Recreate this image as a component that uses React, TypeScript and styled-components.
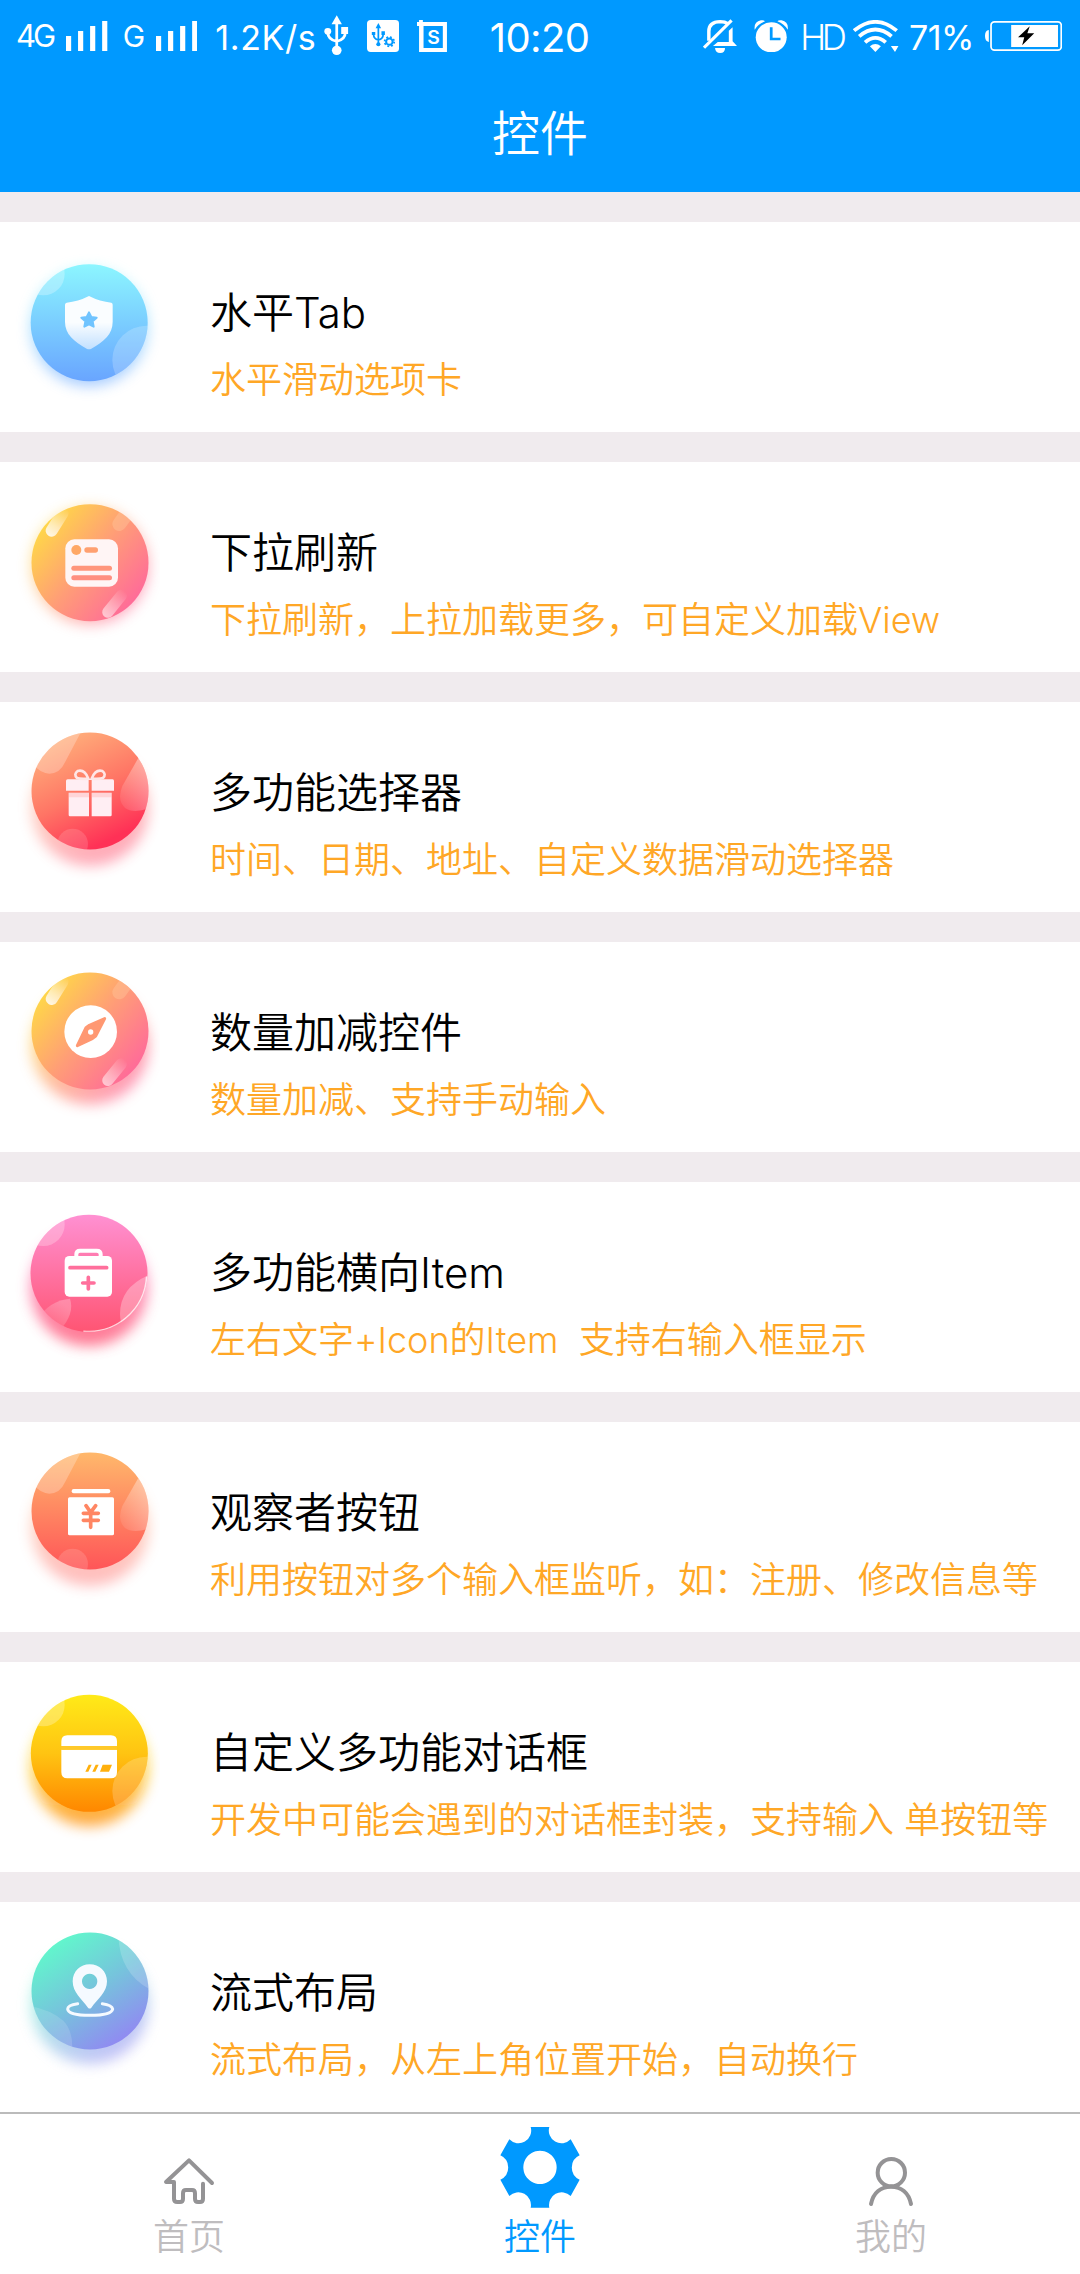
import React from "react";
import styled, { createGlobalStyle } from "styled-components";

const GlobalStyle = createGlobalStyle`
  * { box-sizing: border-box; }
  body {
    margin: 0;
    background: #fff;
    font-family: Inter, "Noto Sans CJK SC", sans-serif;
    font-weight: 350;
  }
  svg { display: block; flex: none; }
`;

const Screen = styled.div`
  display: flex;
  flex-direction: column;
  width: 1080px;
  height: 2274px;
  overflow: hidden;
  background: #f0ebee;
`;

const Header = styled.header`
  height: 192px;
  background: #0099ff;
  color: #fff;
`;

const StatusBar = styled.div`
  display: flex;
  align-items: flex-start;
  height: 72px;
`;

const Slot = styled.div<{ $gap: number; $top: number }>`
  flex: none;
  margin-left: ${(p) => p.$gap}px;
  padding-top: ${(p) => p.$top}px;
`;

const StatusText = styled.span<{
  $gap: number;
  $top: number;
  $width: number;
  $size: number;
  $spacing?: number;
  $weight?: number;
}>`
  flex: none;
  width: ${(p) => p.$width}px;
  margin-left: ${(p) => p.$gap}px;
  padding-top: ${(p) => p.$top}px;
  font-family: Inter, sans-serif;
  font-size: ${(p) => p.$size}px;
  line-height: 40px;
  font-weight: ${(p) => p.$weight ?? 400};
  letter-spacing: ${(p) => p.$spacing ?? 0}px;
  white-space: nowrap;
`;

const PageTitle = styled.h1`
  margin: 0;
  height: 120px;
  line-height: 123px;
  text-align: center;
  font-size: 48px;
  font-weight: 350;
`;

const List = styled.main`
  display: flex;
  flex-direction: column;
  gap: 30px;
  padding-top: 30px;
`;

const Row = styled.section`
  display: flex;
  height: 210px;
  background: #fff;
`;

const RowText = styled.div`
  display: flex;
  flex-direction: column;
  margin-left: 50px;
  padding-top: 59px;
`;

const RowTitle = styled.h2`
  margin: 0;
  height: 64px;
  line-height: 64px;
  font-size: 42px;
  font-weight: 350;
  color: #000;
  white-space: pre;
`;

const RowNote = styled.p`
  margin: 8px 0 0;
  height: 54px;
  line-height: 54px;
  font-size: 36px;
  color: #ffa726;
  white-space: pre;
`;

const TabBar = styled.nav`
  display: grid;
  grid-template-columns: repeat(3, 351px);
  justify-content: center;
  height: 162px;
  border-top: 2px solid #bbb;
  background: #fff;
`;

const Tab = styled.div<{ $active?: boolean }>`
  display: flex;
  flex-direction: column;
  align-items: center;
  padding-top: 12px;
  font-size: 36px;
  line-height: 54px;
  color: ${(p) => (p.$active ? "#0099ff" : "#bfbdbf")};
`;

/* ---------- status bar icons ---------- */

const Glyph = ({ box, children }: { box: [number, number, number, number]; children: React.ReactNode }) => (
  <svg
    width={box[2] / 2.904}
    height={box[3] / 3}
    viewBox={box.join(" ")}
    preserveAspectRatio="none"
    fill="#fff"
  >
    {children}
  </svg>
);

const Signal = () => (
  <Glyph box={[191, 63, 121, 90]}>
    <path d="M191 108h15v45h-15zM226 93h15v60h-15zM261 78h15v75h-15zM296 63h15v90h-15z" />
  </Glyph>
);

const Usb = () => (
  <Glyph box={[943, 45, 71, 121]}>
    <path d="M980 46l15 27h-30z" />
    <circle cx="980" cy="151" r="14" />
    <circle cx="954" cy="94" r="10" />
    <path d="M993 81h20v21h-20z" />
    <path d="M980 70v75M954 96q0 23 26 28M1005 96q0 23-25 28" fill="none" stroke="#fff" strokeWidth="8" />
  </Glyph>
);

const UsbSettings = () => (
  <Glyph box={[1066, 60, 93, 96]}>
    <rect x="1066" y="60" width="93" height="96" rx="11" />
    <g fill="#0099ff" stroke="#0099ff">
      <path d="M1099 69l8 16h-16z" stroke="none" />
      <circle cx="1099" cy="133" r="6" stroke="none" />
      <path d="M1080 96h10v9h-10zM1108 94h10v11h-10z" stroke="none" />
      <path d="M1099 82v48M1085 103q0 14 14 17M1113 103q0 14-14 17" fill="none" strokeWidth="5" />
      <circle cx="1131" cy="125" r="9.5" fill="none" strokeWidth="6" />
      <circle cx="1131" cy="125" r="14" fill="none" strokeWidth="5" strokeDasharray="5.5 5.5" />
    </g>
  </Glyph>
);

const Shot = () => (
  <Glyph box={[1211, 60, 87, 96]}>
    <path d="M1217 60h11v6h70v90h-81v-78h-6v-12h6zM1230 78v66h56v-66z" fillRule="evenodd" />
    <text x="1259" y="132" textAnchor="middle" fontFamily="Inter" fontSize="56" fontWeight="600">
      S
    </text>
  </Glyph>
);

const Muted = () => (
  <Glyph box={[473, 57, 99, 102]}>
    <path
      d="M490 122V94q0-28 33-29q14 0 22 6"
      fill="none"
      stroke="#fff"
      strokeWidth="10"
    />
    <path d="M548 92l11-10v42l13 14h-70l14-12h32z" />
    <path d="M476 143L556 61" stroke="#fff" strokeWidth="9" />
    <path d="M508 144h29q0 15-14 15t-15-15z" />
  </Glyph>
);

const Alarm = () => (
  <Glyph box={[620, 59, 100, 97]}>
    <circle cx="670" cy="111" r="45" />
    <path d="M622 88q-3-24 18-28q8-2 12 3q-20 8-30 25zM718 88q3-24-18-28q-8-2-12 3q20 8 30 25z" />
    <path d="M670 81v35h27" fill="none" stroke="#0099ff" strokeWidth="8" />
  </Glyph>
);

const Wifi = () => (
  <Glyph box={[908, 60, 133, 97]}>
    <g fill="none" stroke="#fff" strokeWidth="11">
      <path d="M911 92q62-53 124 0" />
      <path d="M926 109q47-41 94 0" />
      <path d="M943 127q30-27 60 0" />
    </g>
    <path d="M957 139q16-14 32 0l-16 17zM1018 138h22l-10 18z" />
  </Glyph>
);

const Battery = () => (
  <Glyph box={[1292, 63, 224, 90]}>
    <path d="M1303 90v36q-11-2-11-18t11-18z" />
    <rect x="1309.5" y="65.5" width="204" height="85" rx="10" fill="none" stroke="#fff" strokeWidth="5" />
    <path d="M1368 75h136v66h-136z" />
    <path d="M1422 79l-34 33h18l-6 24l35-36h-20z" fill="#000" />
  </Glyph>
);

/* ---------- list badges ---------- */

type Stops = [string, string][];

interface BadgeProps {
  id: string;
  cx: number;
  cy: number;
  dir: [number, number, number, number];
  stops: Stops;
  shadowY: number;
  shadowOpacity: number;
  decor: React.ReactNode;
  children: React.ReactNode;
}

const Badge = ({ id, cx, cy, dir, stops, shadowY, shadowOpacity, decor, children }: BadgeProps) => (
  <svg width="160" height="210" viewBox="0 6 480 630">
    <defs>
      <linearGradient id={`${id}-fill`} x1={dir[0]} y1={dir[1]} x2={dir[2]} y2={dir[3]}>
        {stops.map(([offset, color]) => (
          <stop key={offset} offset={offset} stopColor={color} />
        ))}
      </linearGradient>
      <clipPath id={`${id}-clip`}>
        <circle cx={cx} cy={cy} r="175.5" />
      </clipPath>
      <filter id={`${id}-blur`} x="-30%" y="-30%" width="160%" height="160%">
        <feGaussianBlur stdDeviation="20" />
      </filter>
      <linearGradient id={`${id}-shine`} x1="0" y1="1" x2="0" y2="0">
        <stop offset="0" stopColor="#fff" stopOpacity="0.85" />
        <stop offset="0.35" stopColor="#fff" stopOpacity="0.6" />
        <stop offset="1" stopColor="#fff" stopOpacity="0" />
      </linearGradient>
      <linearGradient id={`${id}-glow`} x1="1" y1="0" x2="0" y2="1">
        <stop offset="0.2" stopColor="#fff" stopOpacity="0.42" />
        <stop offset="1" stopColor="#fff" stopOpacity="0.05" />
      </linearGradient>
    </defs>
    <circle
      cx={cx}
      cy={cy + shadowY}
      r="176"
      fill={`url(#${id}-fill)`}
      opacity={shadowOpacity}
      filter={`url(#${id}-blur)`}
    />
    <circle cx={cx} cy={cy} r="175.5" fill={`url(#${id}-fill)`} />
    <g clipPath={`url(#${id}-clip)`}>{decor}</g>
    {children}
  </svg>
);

const VERTICAL: [number, number, number, number] = [0, 0, 0, 1];
const DIAGONAL: [number, number, number, number] = [0.12, 0.18, 0.88, 0.82];
const SUNSET: Stops = [
  ["0", "#ffd54a"],
  ["0.5", "#ff9d77"],
  ["1", "#ff6c98"],
];

const Bubbles = () => (
  <g fill="#fff">
    <circle cx="130" cy="135" r="64" opacity="0.27" />
    <circle cx="440" cy="393" r="103" opacity="0.2" />
  </g>
);

const Streaks = ({ id }: { id: string }) => (
  <g>
    <rect x="-18" y="-80" width="36" height="98" rx="18" transform="translate(155 177) rotate(32)" fill={`url(#${id}-shine)`} />
    <rect x="-17" y="-82" width="34" height="98" rx="17" transform="translate(323 422) rotate(39)" fill={`url(#${id}-shine)`} opacity="0.7" />
    <rect x="-21" y="-60" width="42" height="81" rx="21" transform="translate(358 157) rotate(36)" fill="#ffc49a" opacity="0.45" />
  </g>
);

const Petals = ({ id }: { id: string }) => (
  <g fill="#fff">
    <path d="M90 60H262L195 187Q180 221 148 221Q118 219 98 190Z" opacity="0.25" />
    <path d="M440 130L367 258Q350 300 375 324Q400 342 450 324Z" fill={`url(#${id}-glow)`} />
    <circle cx="218" cy="432" r="46" opacity="0.14" />
  </g>
);

const ShieldBadge = () => (
  <Badge id="shield" cx={267.5} cy={308} dir={VERTICAL} stops={[["0", "#8cf6ff"], ["1", "#69a5ff"]]} shadowY={14} shadowOpacity={0.6}
    decor={<g transform="translate(0 27)"><Bubbles /></g>}
  >
    <linearGradient id="shield-face" x1="0" y1="0" x2="0" y2="1">
      <stop offset="0.5" stopColor="#fafdff" />
      <stop offset="1" stopColor="#c2e0ff" />
    </linearGradient>
    <path d="M267 228Q300 245 334 248Q338 249 338 254V305C338 343 312 364 274 386Q267 390 260 386C222 364 195 343 195 305V254Q195 249 200 248Q234 245 267 228Z" fill="url(#shield-face)" />
    <path d="M267 277L274 291L290 293L278 304L281 320L267 313L253 320L256 304L244 293L260 291Z" fill="#70c4ff" stroke="#70c4ff" strokeWidth="6" strokeLinejoin="round" />
  </Badge>
);

const CardListBadge = () => (
  <Badge id="list" cx={270} cy={308} dir={DIAGONAL} stops={SUNSET} shadowY={10} shadowOpacity={0.6}
    decor={<g transform="translate(0 35)"><Streaks id="list" /></g>}
  >
    <rect x="196" y="238" width="158" height="142" rx="27" fill="#fff5f5" />
    <circle cx="229" cy="270" r="15" fill="#ffa866" />
    <rect x="253" y="262" width="41" height="16" rx="8" fill="#ffa070" />
    <rect x="214" y="317" width="122" height="15" rx="7.5" fill="#ff957b" />
    <rect x="214" y="346" width="122" height="15" rx="7.5" fill="#ff8f80" />
  </Badge>
);

const GiftBadge = () => (
  <Badge id="gift" cx={270} cy={273} dir={[0.25, 0, 0.75, 1]} stops={[["0", "#ffb37c"], ["0.5", "#ff7565"], ["0.9", "#ff3156"]]} shadowY={48} shadowOpacity={0.42}
    decor={<Petals id="gift" />}
  >
    <path d="M198 243q0-5 5-5h63v34h-68zM275 238h63q4 0 4 5v29h-67zM206 278h61v71h-57q-4 0-4-4zM275 278h60v67q0 4-4 4h-56z" fill="#ffeef3" />
    <path d="M206 278h61v14h-61zM275 278h60v14h-60z" fill="#ff9b9b" opacity="0.3" />
    <path d="M265 236Q254 207 233 213Q220 223 231 234Q240 238 265 236ZM275 236Q286 207 307 213Q320 223 309 234Q300 238 275 236Z" fill="none" stroke="#ffe6e6" strokeWidth="8" />
  </Badge>
);

const CompassBadge = () => (
  <Badge id="compass" cx={270} cy={273} dir={DIAGONAL} stops={SUNSET} shadowY={44} shadowOpacity={0.7} decor={<Streaks id="compass" />}>
    <circle cx="272" cy="275" r="79" fill="#fff" />
    <path d="M314 236L287 288L277 296L232 317L258 263L268 256Z" fill="#ff9872" stroke="#ff9872" strokeWidth="9" strokeLinejoin="round" />
    <circle cx="272" cy="276" r="8" fill="#fff" />
  </Badge>
);

const MedicalBadge = () => (
  <Badge id="medical" cx={267} cy={280} dir={VERTICAL} stops={[["0", "#ff90d2"], ["1", "#ff5573"]]} shadowY={42} shadowOpacity={0.8}
    decor={
      <g fill="#fff">
        <circle cx="130" cy="134" r="64" opacity="0.25" />
        <path d="M460 280Q360 315 360 402Q360 435 380 470H460Z" opacity="0.3" />
        <path d="M110 420Q150 360 210 356Q225 400 180 450Z" fill="url(#medical-glow)" opacity="0.6" />
        <path d="M441 290A175 175 0 0 1 250 455" fill="none" stroke="#fff" strokeWidth="7" opacity="0.75" />
      </g>
    }
  >
    <path d="M229 234V223Q229 212 240 212H290Q302 212 302 223V234" fill="none" stroke="#fff" strokeWidth="12" />
    <rect x="194" y="228" width="142" height="122" rx="14" fill="#fff" />
    <path d="M210 263H320M248 309H282M265 292V327" stroke="#ff6f9c" strokeWidth="11" strokeLinecap="round" />
  </Badge>
);

const MoneyBadge = () => (
  <Badge id="money" cx={270} cy={273} dir={VERTICAL} stops={[["0", "#ffb86b"], ["1", "#ff5558"]]} shadowY={48} shadowOpacity={0.4} decor={<Petals id="money" />}>
    <rect x="215" y="207" width="116" height="13" rx="6" fill="#fff" />
    <rect x="204" y="232" width="138" height="114" rx="5" fill="#fff" />
    <path d="M258 257L272 277L287 257M250 280H295M250 301H295M272 277V322" fill="none" stroke="#ff8663" strokeWidth="11" strokeLinecap="round" strokeLinejoin="round" />
  </Badge>
);

const CreditBadge = () => (
  <Badge id="credit" cx={268} cy={280} dir={VERTICAL} stops={[["0", "#ffea18"], ["0.5", "#ffc412"], ["1", "#ff8700"]]} shadowY={42} shadowOpacity={0.75} decor={<Bubbles />}>
    <path d="M184 258V244Q184 226 202 226H333Q351 226 351 244V258ZM184 269H351V337Q351 355 333 355H202Q184 355 184 337Z" fill="#fff" />
    <path d="M184 258H351V269H184Z" fill="#ffc92a" />
    <path d="M266 314h9l-10 21h-9zM287 314h9l-10 21h-9zM308 314h28l-9 21h-27z" fill="#ffb00d" />
  </Badge>
);

const PlaceBadge = () => (
  <Badge id="place" cx={270} cy={273} dir={[0.2, 0.05, 0.8, 0.95]} stops={[["0", "#60facb"], ["0.5", "#76c4dc"], ["1", "#9286f3"]]} shadowY={42} shadowOpacity={0.55}
    decor={
      <g fill="#fff">
        <path d="M355 110Q360 220 450 268V110Z" opacity="0.18" />
        <path d="M90 318Q150 328 190 362Q222 395 216 460H90Z" opacity="0.14" />
      </g>
    }
  >
    <path d="M269 193C241 193 218 214 218 244C218 278 246 297 264 323Q269 328 274 323C292 297 321 278 321 244C321 214 298 193 269 193ZM269 221A23 23 0 1 1 268.9 221Z" fill="#f5faff" fillRule="evenodd" />
    <path d="M233 311Q203 315 203 327Q205 346 270 346Q335 346 338 327Q336 315 307 311" fill="none" stroke="#f5faff" strokeWidth="9" strokeLinecap="round" />
  </Badge>
);

const items: { icon: React.ComponentType; title: string; note: string }[] = [
  { icon: ShieldBadge, title: "水平Tab", note: "水平滑动选项卡" },
  { icon: CardListBadge, title: "下拉刷新", note: "下拉刷新，上拉加载更多，可自定义加载View" },
  { icon: GiftBadge, title: "多功能选择器", note: "时间、日期、地址、自定义数据滑动选择器" },
  { icon: CompassBadge, title: "数量加减控件", note: "数量加减、支持手动输入" },
  { icon: MedicalBadge, title: "多功能横向Item", note: "左右文字+Icon的Item  支持右输入框显示" },
  { icon: MoneyBadge, title: "观察者按钮", note: "利用按钮对多个输入框监听，如：注册、修改信息等" },
  { icon: CreditBadge, title: "自定义多功能对话框", note: "开发中可能会遇到的对话框封装，支持输入 单按钮等" },
  { icon: PlaceBadge, title: "流式布局", note: "流式布局，从左上角位置开始，自动换行" },
];

export default function App() {
  return (
    <>
      <GlobalStyle />
      <Screen>
        <Header>
          <StatusBar>
            <StatusText $gap={16} $top={16} $width={50} $size={31} $spacing={-3}>4G</StatusText>
            <Slot $gap={0} $top={21}><Signal /></Slot>
            <StatusText $gap={15} $top={16} $width={33} $size={30} $spacing={-2}>G</StatusText>
            <Slot $gap={0} $top={21}><Signal /></Slot>
            <StatusText $gap={18} $top={18} $width={109} $size={34} $spacing={0.6}>1.2K/s</StatusText>
            <Slot $gap={0} $top={15}><Usb /></Slot>
            <Slot $gap={18} $top={20}><UsbSettings /></Slot>
            <Slot $gap={18} $top={20}><Shot /></Slot>
            <StatusText $gap={43} $top={18} $width={213} $size={40} $spacing={-0.6}>10:20</StatusText>
            <Slot $gap={0} $top={19}><Muted /></Slot>
            <Slot $gap={17} $top={20}><Alarm /></Slot>
            <StatusText $gap={12} $top={17} $width={53} $size={35} $spacing={-4.5} $weight={300}>HD</StatusText>
            <Slot $gap={0} $top={20}><Wifi /></Slot>
            <StatusText $gap={10} $top={18} $width={76} $size={34} $spacing={-0.6}>71%</StatusText>
            <Slot $gap={0} $top={21}><Battery /></Slot>
          </StatusBar>
          <PageTitle>控件</PageTitle>
        </Header>
        <List>
          {items.map(({ icon: Icon, title, note }) => (
            <Row key={title}>
              <Icon />
              <RowText>
                <RowTitle>{title}</RowTitle>
                <RowNote>{note}</RowNote>
              </RowText>
            </Row>
          ))}
        </List>
        <TabBar>
          <Tab>
            <svg width="84" height="84" viewBox="141 78 252 252">
              <path d="M336 249L267 181L198 246H222V296Q222 306 232 306H240Q249 306 249 296V280Q249 270 258 270H276Q285 270 285 280V296Q285 306 294 306H300Q309 306 309 296V251" fill="none" stroke="#949395" strokeWidth="12" strokeLinecap="round" strokeLinejoin="round" />
            </svg>
            首页
          </Tab>
          <Tab $active>
            <svg width="84" height="84" viewBox="1194 78 252 252">
              <path d="M1292 81H1348A38 38 0 0 0 1412 118L1439 166A40 40 0 0 0 1439 239L1412 288A38 38 0 0 0 1348 323H1292A38 38 0 0 0 1228 288L1201 239A40 40 0 0 0 1201 166L1228 118A38 38 0 0 0 1292 81ZM1320 152A50 50 0 1 1 1319.9 152Z" fill="#0099ff" fillRule="evenodd" />
            </svg>
            控件
          </Tab>
          <Tab>
            <svg width="84" height="84" viewBox="207 78 252 252">
              <g fill="none" stroke="#949395" strokeWidth="12" strokeLinecap="round">
                <circle cx="334" cy="218" r="41" />
                <path d="M273 312C280 278 303 260 333 260C363 260 386 278 393 312" />
              </g>
            </svg>
            我的
          </Tab>
        </TabBar>
      </Screen>
    </>
  );
}
